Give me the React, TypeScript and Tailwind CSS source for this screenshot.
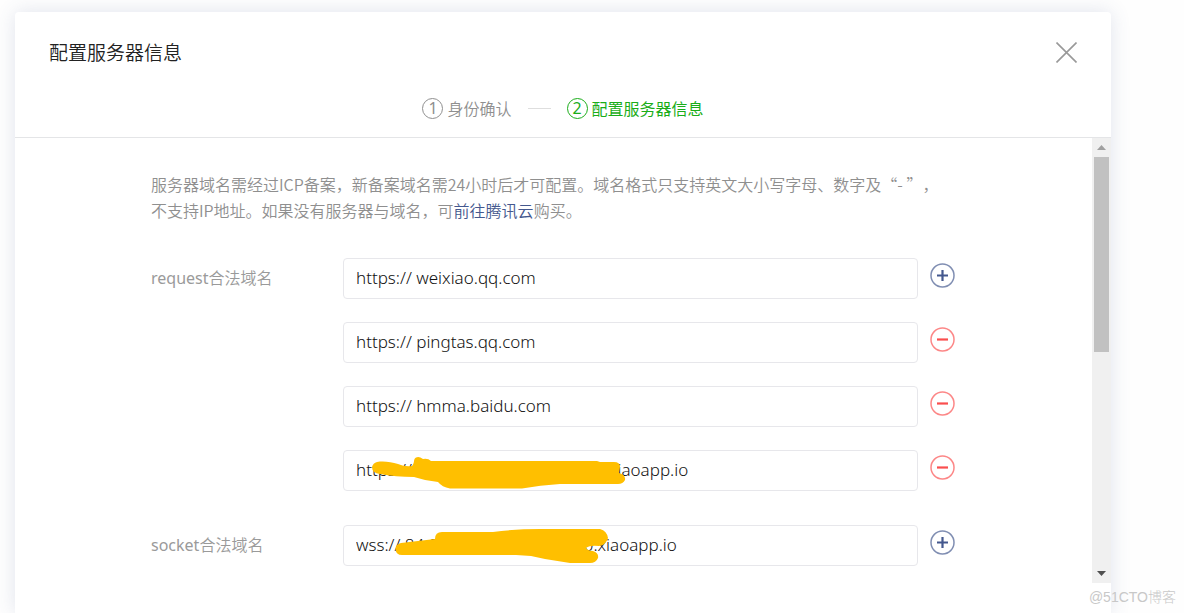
import { useState } from "react";

const FONT = "font-['Noto_Sans','Noto_Sans_CJK_SC',sans-serif]";
const CJK = "font-['Noto_Sans_CJK_SC',sans-serif] font-[350]";

type Mask = { className: string; viewBox: string; width: number; height: number; path: string };
type Row = { id: string; label?: string; value: string; action: "add" | "remove"; mask?: Mask };

const httpsMask: Mask = {
  className: "absolute left-[29px] top-[7px]",
  viewBox: "372 457 254 32",
  width: 254,
  height: 32,
  path: "M377 462 C384 461 391 462 398 464 Q405 467 412 466 C415 463 413 459 416 457.5 Q419 456 423 459 Q428 458 431 461 L597 461 L600 462 H614 Q620 462 620 467 Q619 472 619 473 Q626 475 625 480 Q623 484 618 484 H560 Q540 485 522 488.500 H450 Q442 487 438 482 Q426 481 414 477 C402 477 390 476 380 474 Q372 473 372 467 Q373 463 377 462 Z",
};

const wssMask: Mask = {
  className: "absolute left-[52px] top-[4px]",
  viewBox: "395 529 213 34",
  width: 213,
  height: 34,
  path: "M401 543 Q418 541 435 539 Q435 532 442 532 H493 Q515 529 540 529 H600 Q607 531 608 538 Q606 545 599 546 Q590 545 586 548 Q588 551 593 551 Q599 553 598 558 Q596 563 590 563 H570 L545 559 L531 556 L516 555 H402 Q396 555 395.500 549 Q396 544 401 543 Z",
};

const requestRows: Row[] = [
  { id: "request-1", label: "request", value: "https:// weixiao.qq.com", action: "add" },
  { id: "request-2", value: "https:// pingtas.qq.com", action: "remove" },
  { id: "request-3", value: "https:// hmma.baidu.com", action: "remove" },
  { id: "request-4", value: "https:// 0000000000.000000000.xiaoapp.io", action: "remove", mask: httpsMask },
];

const socketRows: Row[] = [
  { id: "socket-1", label: "socket", value: "wss:// 84.00000000000000000.xiaoapp.io", action: "add", mask: wssMask },
];

function CircleIcon({ action }: { action: "add" | "remove" }) {
  return (
    <svg width="25" height="25" viewBox="0 0 25 25" fill="none" stroke="currentColor" aria-hidden="true">
      <circle cx="12.5" cy="12.5" r="11.5" strokeWidth="1.5" opacity="0.68" />
      <path d={action === "add" ? "M7 12.5h11M12.5 7v11" : "M7 12.5h11"} strokeWidth="2.2" />
    </svg>
  );
}

function DomainRow({ row }: { row: Row }) {
  const [value, setValue] = useState(row.value);
  return (
    <div className="flex items-start">
      <div className="w-48 shrink-0">
        {row.label && (
          <label htmlFor={row.id} className="block text-base leading-[39px] text-[#9a9a9a]">
            {row.label}
            <span className={CJK}>合法域名</span>
          </label>
        )}
      </div>
      <div className="relative min-w-0 flex-1">
        <input
          id={row.id}
          type="text"
          aria-label={row.label ? undefined : row.id}
          value={value}
          onChange={(e) => setValue(e.target.value)}
          className="block h-[41px] w-full rounded border border-[#e7e7eb] bg-white px-3 pb-0.5 text-[17px] font-light text-[#111] outline-none"
        />
        {row.mask && (
          <svg
            className={`${row.mask.className} pointer-events-none`}
            width={row.mask.width}
            height={row.mask.height}
            viewBox={row.mask.viewBox}
            aria-hidden="true"
          >
            <path d={row.mask.path} fill="#ffbf00" />
          </svg>
        )}
      </div>
      <button
        type="button"
        aria-label={row.action}
        className={`mt-[5px] ml-3 shrink-0 ${row.action === "add" ? "text-[#44588e]" : "text-[#fa4e4e]"}`}
      >
        <CircleIcon action={row.action} />
      </button>
    </div>
  );
}

function StepNumber({ value }: { value: number }) {
  return (
    <span className="flex size-[21px] items-center justify-center rounded-full border border-current text-base leading-none">
      {value}
    </span>
  );
}

function ScrollBar() {
  return (
    <div className="flex w-[19px] shrink-0 flex-col items-center bg-[#f0f0f0]">
      <button type="button" aria-label="up" className="flex h-[19px] w-full items-center justify-center text-[#a0a0a0]">
        <svg width="9" height="5" viewBox="0 0 9 5" aria-hidden="true">
          <path d="M0 5L4.500 0L9 5Z" fill="currentColor" />
        </svg>
      </button>
      <div className="w-full flex-1 px-0.5">
        <div className="h-[48%] w-[15px] bg-[#c1c1c1]" />
      </div>
      <button type="button" aria-label="down" className="flex h-[19px] w-full items-center justify-center text-[#505050]">
        <svg width="9" height="5" viewBox="0 0 9 5" aria-hidden="true">
          <path d="M0 0L4.500 5L9 0Z" fill="currentColor" />
        </svg>
      </button>
    </div>
  );
}

export default function App() {
  return (
    <div className={`relative flex h-screen overflow-hidden bg-[#fefefe] pt-3 pr-[73px] pl-[15px] ${FONT}`}>
      <main className="flex min-w-0 flex-1 flex-col rounded-t bg-white pb-[30px] shadow-[0_0_20px_rgba(68,88,142,0.16)]">
        <header className="border-b border-[#e4e5e7] px-[34px] pt-5 pb-[18px]">
          <div className="flex h-10 items-center justify-between">
            <h1 className={`text-[19px] text-[#222] ${CJK}`}>配置服务器信息</h1>
            <button type="button" aria-label="close" className="text-[#999]">
              <svg width="21" height="21" viewBox="0 0 21 21" fill="none" stroke="currentColor" strokeWidth="1.6" aria-hidden="true">
                <path d="M0.500 0.500L20.500 20.500M20.500 0.500L0.500 20.500" />
              </svg>
            </button>
          </div>
          <ol className="mt-[25px] flex h-[22px] items-center justify-center gap-4 text-base">
            <li className="flex items-center gap-1 text-[#8f8f8f]">
              <StepNumber value={1} />
              <span className={`leading-5 ${CJK}`}>身份确认</span>
            </li>
            <li aria-hidden="true" className="h-px w-[23px] bg-[#dedede]" />
            <li className="flex items-center gap-1 text-[#1aad19]">
              <StepNumber value={2} />
              <span className="font-['Noto_Sans_CJK_SC',sans-serif] leading-5">配置服务器信息</span>
            </li>
          </ol>
        </header>
        <div className="flex min-h-0 flex-1">
          <div className="min-w-0 flex-1 overflow-hidden pt-[33px] pr-[137px] pl-[136px]">
            <p className={`text-base leading-[26px] whitespace-nowrap text-[#8f8f8f] [text-spacing-trim:space-all] ${CJK}`}>
              服务器域名需经过ICP备案，新备案域名需24小时后才可配置。域名格式只支持英文大小写字母、数字及“- ”，
              <br />
              不支持IP地址。如果没有服务器与域名，可
              <a href="#cloud" className="text-[#44588e]">前往腾讯云</a>
              购买。
            </p>
            <form className="flex flex-col gap-[34px] pt-[35px]">
              <div className="flex flex-col gap-[23px]">
                {requestRows.map((row) => (
                  <DomainRow key={row.id} row={row} />
                ))}
              </div>
              <div className="flex flex-col gap-[23px]">
                {socketRows.map((row) => (
                  <DomainRow key={row.id} row={row} />
                ))}
              </div>
            </form>
          </div>
          <ScrollBar />
        </div>
      </main>
      <div className="absolute right-2 bottom-1.5 font-['Liberation_Sans','Noto_Sans_CJK_SC',sans-serif] text-sm font-light text-[#c8c8c8]">
        @51CTO博客
      </div>
    </div>
  );
}
